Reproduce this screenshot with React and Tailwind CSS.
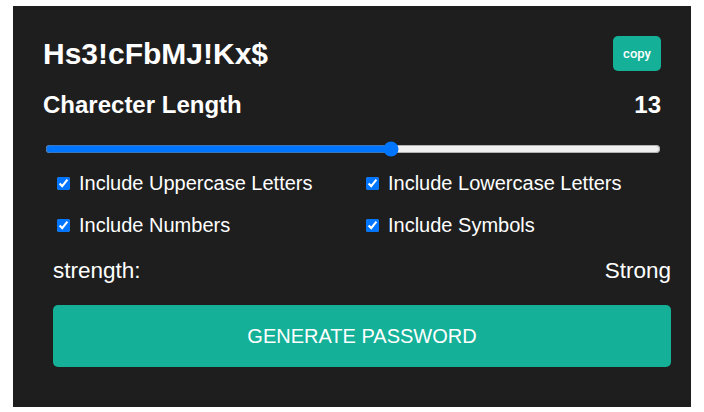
import React, { useState } from 'react';

const options = [
    { key: 'upper', label: 'Include Uppercase Letters' },
    { key: 'lower', label: 'Include Lowercase Letters' },
    { key: 'numbers', label: 'Include Numbers' },
    { key: 'symbols', label: 'Include Symbols' },
];

export default function App() {
    const [length, setLength] = useState(13);
    const [checked, setChecked] = useState({ upper: true, lower: true, numbers: true, symbols: true });

    return (
        <div className="min-h-screen bg-white pt-[6px] pl-[13px] font-['Liberation_Sans',Arial,sans-serif]">
            {/* Card */}
            <div className="w-[678px] bg-[#1e1e1e] text-white px-[30px] pt-[30px] pb-[40px]">
                {/* Password row */}
                <div className="flex items-center justify-between h-[35px]">
                    <h1 className="text-[30px] font-bold leading-none">Hs3!cFbMJ!Kx$</h1>
                    <button className="w-[48px] h-[35px] rounded-[5px] bg-[#14b098] text-white text-[13px] font-medium font-['Roboto',sans-serif]">
                        copy
                    </button>
                </div>

                {/* Length */}
                <div className="mt-[20px] flex items-center justify-between h-[28px] text-[24px] font-bold">
                    <span>Charecter Length</span>
                    <span>{length}</span>
                </div>

                <div className="mt-[22px] h-[16px] flex items-center">
                    <input
                        type="range"
                        min={4}
                        max={20}
                        value={length}
                        onChange={(e) => setLength(Number(e.target.value))}
                        className="w-[618px] m-0 ml-[2px]"
                    />
                </div>

                <div className="ml-[10px] mr-[-10px]">
                    {/* Options */}
                    <div className="mt-[12px] grid grid-cols-2 gap-y-[14px]">
                        {options.map((o) => (
                            <label key={o.key} className="flex items-center h-[28px] text-[20px]">
                                <input
                                    type="checkbox"
                                    checked={checked[o.key]}
                                    onChange={() => setChecked({ ...checked, [o.key]: !checked[o.key] })}
                                    className="w-[13px] h-[13px] m-0 ml-[4px] mr-[9px]"
                                />
                                <span>{o.label}</span>
                            </label>
                        ))}
                    </div>

                    {/* Strength */}
                    <div className="mt-[18px] flex items-center justify-between h-[28px] text-[22.5px]">
                        <span>strength:</span>
                        <span>Strong</span>
                    </div>

                    <button className="mt-[20px] w-full h-[62px] rounded-[5px] bg-[#14b098] text-white text-[20px]">
                        GENERATE PASSWORD
                    </button>
                </div>
            </div>
        </div>
    );
}
